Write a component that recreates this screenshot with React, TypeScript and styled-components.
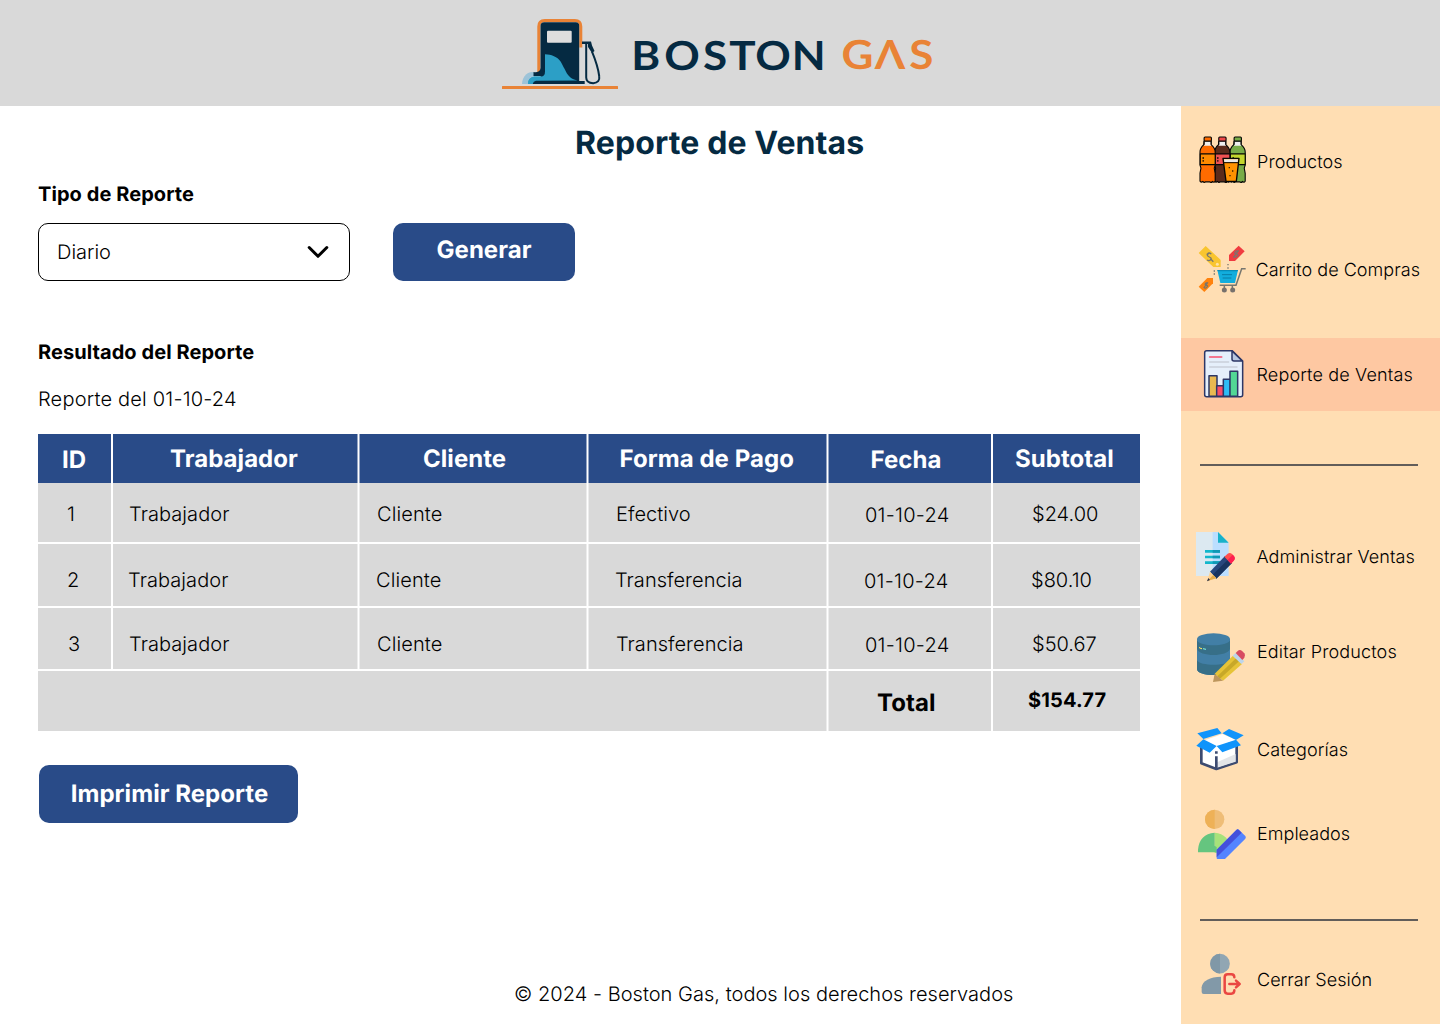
import React from "react";
import styled, { createGlobalStyle } from "styled-components";

const colors = {
  navy: "#052a42",
  blue: "#294b88",
  grey: "#d9d9d9",
  orange: "#e98336",
  peach: "#ffdeb3",
  active: "#fec8a2",
};

const GlobalStyle = createGlobalStyle`
  *, *::before, *::after { box-sizing: border-box; }
  body {
    margin: 0;
    background: #fff;
    color: #000;
    font-family: Inter, "Liberation Sans", sans-serif;
    text-rendering: geometricPrecision;
    -webkit-font-smoothing: antialiased;
  }
`;

const Page = styled.div`
  width: 1440px;
  height: 1024px;
  display: flex;
  flex-direction: column;
  overflow: hidden;
`;

const Header = styled.header`
  height: 106px;
  flex: none;
  display: flex;
  align-items: center;
  justify-content: center;
  background: ${colors.grey};
`;

const Wordmark = styled.text`
  font-family: Lato, Inter, sans-serif;
  font-size: 40px;
  font-weight: 700;
  text-anchor: middle;
`;

const Body = styled.div`
  flex: 1;
  display: flex;
  min-height: 0;
`;

const Main = styled.main`
  width: 1181px;
  padding: 17px 0 0 38px;
  display: flex;
  flex-direction: column;
  align-items: flex-start;
`;

const Title = styled.h1`
  margin: 0 0 19px 537px;
  font-size: 32px;
  line-height: 40px;
  letter-spacing: 0.12px;
  font-weight: 700;
  color: ${colors.navy};
  white-space: nowrap;
`;

const SectionLabel = styled.h2`
  margin: 0;
  font-size: 20px;
  line-height: 24px;
  letter-spacing: 0.07px;
  font-weight: 700;
`;

const Controls = styled.div`
  display: flex;
  gap: 43px;
  margin: 17px 0 59px;
`;

const Select = styled.div`
  width: 312px;
  height: 58px;
  border: 1px solid #000;
  border-radius: 10px;
  padding: 0 20px 0 18px;
  display: flex;
  align-items: center;
  justify-content: space-between;
  font-size: 20px;
  line-height: 24px;
  font-weight: 300;
`;

const Button = styled.button<{ $width: number; $lift?: number; $indent?: number }>`
  width: ${(p) => p.$width}px;
  height: 58px;
  flex: none;
  border: 0;
  border-radius: 10px;
  padding: 0 0 ${(p) => p.$lift ?? 0}px ${(p) => p.$indent ?? 0}px;
  background: ${colors.blue};
  color: #fff;
  font-family: inherit;
  text-rendering: inherit;
  font-size: 24px;
  line-height: 30px;
  letter-spacing: 0.05px;
  font-weight: 700;
  white-space: nowrap;
`;

const PrintRow = styled.div`
  padding: 34px 0 0 1px;
`;

const Caption = styled.p`
  margin: 23px 0;
  font-size: 20px;
  line-height: 24px;
  letter-spacing: 0.2px;
  font-weight: 300;
`;

const Table = styled.div`
  width: 1102px;
  display: flex;
  flex-direction: column;
`;

const Row = styled.div<{ $height: number; $gap?: number; $head?: boolean }>`
  height: ${(p) => p.$height}px;
  margin-bottom: ${(p) => p.$gap ?? 0}px;
  display: grid;
  grid-template-columns: 74px 245px 228px 239px 164px 147px;
  column-gap: 1px;
  --cell: ${(p) => (p.$head ? colors.blue : colors.grey)};
  color: ${(p) => (p.$head ? "#fff" : "#000")};
`;

type Edge = "none" | "soft" | "white";
const edgeColor = { none: "var(--cell)", soft: "rgba(255,255,255,.5)", white: "#fff" };

const Cell = styled.div<{
  $x: number;
  $y: number;
  $left: Edge;
  $right: Edge;
  $span?: number;
  $size?: number;
  $bold?: boolean;
  $tracking?: number;
}>`
  grid-column: span ${(p) => p.$span ?? 1};
  background: var(--cell);
  border-style: solid;
  border-width: 0 1px;
  border-left-color: ${(p) => edgeColor[p.$left]};
  border-right-color: ${(p) => edgeColor[p.$right]};
  padding: ${(p) => p.$y}px 0 0 ${(p) => p.$x - 1}px;
  font-size: ${(p) => p.$size ?? 20}px;
  line-height: 24px;
  letter-spacing: ${(p) => p.$tracking ?? 0.05}px;
  font-weight: ${(p) => (p.$bold ? 700 : 300)};
  white-space: nowrap;
`;

const Footer = styled.footer`
  margin: auto 0 18px 476px;
  font-size: 20px;
  line-height: 24px;
  letter-spacing: 0.03px;
  font-weight: 300;
  white-space: nowrap;
`;

const Sidebar = styled.aside`
  width: 259px;
  background: ${colors.peach};
  display: flex;
  flex-direction: column;
`;

const NavItem = styled.a<{ $top: number; $height: number; $active?: boolean }>`
  display: flex;
  flex: none;
  margin-top: ${(p) => p.$top}px;
  height: ${(p) => p.$height}px;
  background: ${(p) => (p.$active ? colors.active : "transparent")};
`;

const NavLabel = styled.span<{ $y: number; $x?: number; $tracking?: number }>`
  padding: ${(p) => p.$y}px 0 0 ${(p) => p.$x ?? 6}px;
  font-size: 18px;
  line-height: 22px;
  letter-spacing: ${(p) => p.$tracking ?? 0.04}px;
  font-weight: 300;
  white-space: nowrap;
`;

const Divider = styled.hr<{ $top: number }>`
  flex: none;
  width: 218px;
  height: 2px;
  margin: ${(p) => p.$top}px 0 0 19px;
  border: 0;
  background: #625d5a;
`;

function Logo() {
  return (
    <svg width="440" height="80" viewBox="500 13 440 80">
      <path d="M522 84a10.500 12 0 0 1 13-11.600V84z" fill="#9dc3d8" />
      <path d="M528 84q0-7 7-7.500h6V84z" fill="#2c9fc6" />
      <path d="M538.800 72V26.500q0-6 6-6h30q6 0 6 6V47.500" fill="none" stroke={colors.orange} strokeWidth="3" />
      <path d="M540.500 26q0-3.700 3.700-3.700h31.500q3.500 0 3.500 3.700v55h5.500v3h-52v-3l8-3v-2h-7.200v-4q3 .6 5-.5 2-1 2-3.500z" fill={colors.navy} />
      <rect x="547" y="30.700" width="24.700" height="12" rx="1" fill="#dedede" />
      <path d="M545 54.300c14 1 16 7.500 19.500 14.500 3 6.500 6 10.500 13 11.700L536 80.800q-2.500.2-3.500 3.200H528q0-7 7-7.500h6q4 0 4-5z" fill="#2c9fc6" />
      <path d="M582 41.500h9l1 4 2.500 5.500-2.500 2-4-6V44H582z" fill={colors.navy} />
      <path d="M586.200 44v33.500q0 5.500 7 5.700 7-.5 6-7-1.200-10-7.200-24.500" fill="none" stroke={colors.navy} strokeWidth="2" />
      <rect x="502" y="86" width="116" height="3" rx=".5" fill={colors.orange} />
      <g transform="scale(1.1 1)">
        <Wordmark x="587 620 650 675 702.700 735.300" y="69.900" fill={colors.navy}>BOSTON</Wordmark>
        <Wordmark x="779.500 809 837.500" y="68.700" fill={colors.orange}>GΛS</Wordmark>
      </g>
    </svg>
  );
}

const bottlePath = "M13 12h22v10q13 9 13 21v37l-3 9 3 15v22q-4 6-8 1-5 5-10 1h-12q-5 4-9-1-5 4-9-1v-23l3-14-3-9V43q0-12 12-21z";

function Bottle({ x, body, label, cap }: { x: number; body: string; label: string; cap: string }) {
  return (
    <g transform={`translate(${x} 51) scale(.95 1.05)`} stroke="#050505" strokeWidth="3.500" strokeLinejoin="round">
      <path d={bottlePath} fill={body} />
      <path d="M14 12h20v10l2 3H12l2-3z" fill="#eee" stroke="none" />
      <path d="M13 12v10m22-10v10" />
      <path d="M1 48h47v31H1z" fill={label} />
      <rect x="13" y="0" width="23" height="12" rx="3" fill={cap} />
      <path d="M10 57v14" strokeDasharray="6 3" />
    </g>
  );
}

const icons = {
  products: (
    <g>
      <Bottle x={147} body="#78ac48" label="#c3d52e" cap="#78ac48" />
      <Bottle x={101} body="#5b2b1b" label="#f05252" cap="#f04848" />
      <Bottle x={57} body="#ff6b00" label="#ff8a00" cap="#ff6b00" />
      <path d="M126 115h48l-8 69h-31z" fill="#ff9100" stroke="#050505" strokeWidth="4" strokeLinejoin="round" />
      <path d="M129 118h42l-1 9h-40z" fill="#e9e9e9" />
      <path d="M129 128h42" stroke="#050505" strokeWidth="3" />
      <path d="M143 141h4v4h-4zm10 10h4v4h-4zm-8 14h4v4h-4z" fill="#402000" />
    </g>
  ),
  cart: (
    <g>
      <path d="M53 54l21-21 43 40q3 3 2 8v15H97z" fill="#f9c52f" />
      <circle cx="109" cy="88" r="4.500" fill="#ffe2a8" />
      <path d="M144 60l29-28 18 17-29 29h-18z" fill="#f03b40" />
      <path d="M53 155l26-26h17v16l-26 26z" fill="#ff820d" />
      <g fill="none" stroke="#77766f" strokeWidth="4">
        <path d="M91 57q-8-6-11 0t5 9 4 8-11 1M77 56l5 4m8 13 7 7" />
        <path d="M170 49q-5-3-8 2t5 6 1 7-9-1m-2 4 16-21M80 144q-5-2-7 2t4 5 0 6-8-1m-1 3 13-17" strokeWidth="3.500" />
        <path d="M194 101h-12l-17 50h-49M130 152v8m24-8v8" strokeWidth="4.500" />
        <path d="M100 106v4m0 5v4m41-32v4m0 6v4" />
      </g>
      <path d="M109 105h62l-9 39h-44z" fill="#12addd" />
      <path d="M109 105h62l-1 4h-60z" fill="#078bb8" />
      <path d="M123 119h30m-28 10h26" stroke="#087da6" strokeWidth="3" />
      <circle cx="130" cy="165" r="7.500" fill="#77716c" />
      <circle cx="155" cy="165" r="7.500" fill="#77716c" />
    </g>
  ),
  report: (
    <g stroke="#2d3766" strokeWidth="4.500" strokeLinejoin="round">
      <path d="M77 47h77l31 31v101q0 6-6 6H77q-6 0-6-6V53q0-6 6-6z" fill="#e5effb" />
      <path d="M153 48v24q0 6 6 6h25z" fill="#b8c7e0" />
      <path d="M84 122h24v62H84z" fill="#e9b950" />
      <path d="M107 152h21v32h-21z" fill="#fb4d68" />
      <path d="M127 133h21v51h-21z" fill="#2ebcf5" />
      <path d="M147 109h23v75h-23z" fill="#52d795" />
      <path d="M86 66h36" stroke="#f7506e" strokeWidth="5" strokeLinecap="round" />
      <path d="M86 81h57M86 96h82" stroke="#c9cfda" strokeWidth="4" strokeLinecap="round" />
    </g>
  ),
  manage: (
    <g>
      <path d="M45 36h66l32 32v100H45z" fill="#bbdeff" />
      <path d="M45 36h50v132H45z" fill="#dce9f1" />
      <path d="M111 36l32 32h-32z" fill="#18b2c9" />
      <path d="M72 94h45M72 111h45M72 128h45" stroke="#12b7cc" strokeWidth="8" />
      <path d="M95 94h22M95 111h22M95 128h22" stroke="#1098b4" strokeWidth="8" />
      <path d="M87 155l45-47 21 21-47 47z" fill="#27477d" />
      <path d="M95 164l47-46 11 11-47 47z" fill="#183460" />
      <path d="M130 110l10-9q7-5 14 2l4 4q7 8 0 15l-8 9z" fill="#ff4f50" />
      <path d="M140 120l15-16 3 3q7 8 0 15l-8 9z" fill="#ff1e51" />
      <path d="M87 155l19 20-27 8z" fill="#ffd18e" />
      <path d="M97 165l9 10-27 8z" fill="#e7ad48" />
      <path d="M82 174l5 6-9 4z" fill="#26304c" />
    </g>
  ),
  edit: (
    <g>
      <path d="M48 57v90c0 24 99 24 99 0V57z" fill="#427fa6" />
      <path d="M48 61c8 20 91 20 99 0v25c-6 25-93 25-99 0zM48 121c8 18 91 18 99 0v26c0 24-99 24-99 0z" fill="#376f88" />
      <ellipse cx="97.500" cy="57" rx="49.500" ry="17" fill="#427fa6" />
      <path d="M54 80q5 5 9 4v4q-6-1-9-4z" fill="#f1dd65" />
      <path d="M66 84l9 2v4l-9-2z" fill="#74dccd" />
      <path d="M101 161l55-54 27 25-57 50z" fill="#e6c337" />
      <path d="M109 169l56-54 9 9-57 52z" fill="#c8a829" />
      <path d="M155 107l9-8 26 25-9 8z" fill="#bdd5eb" />
      <path d="M164 99l6-6q7-6 14 1l6 6q5 6 0 13l-6 7z" fill="#d74c62" />
      <path d="M101 161l25 21-30 4z" fill="#bd965c" />
    </g>
  ),
  categories: (
    <g strokeLinejoin="round">
      <path d="M61 90l46-21 60 22v51l-61 20-45-17z" fill="#fff" stroke="#3d4b70" strokeWidth="8" />
      <path d="M66 77l58-20 42 18-57 20z" fill="#fff" />
      <path d="M108 142l56-25v23l-56 18z" fill="#e3e5e8" />
      <path d="M106 109v7m0 8v36" stroke="#3d4b70" strokeWidth="8" />
      <path d="M49 55l60-16 13 16-55 17zM124 55l20-13 44 19-23 14zM46 92l21-19 40 20-21 20zM107 93l58-19 15 17-56 21z" fill="#1094fb" />
    </g>
  ),
  employees: (
    <g>
      <circle cx="101" cy="58" r="29" fill="#efbd77" />
      <path d="M101 29a29 29 0 0 0 0 58z" fill="#eeb157" />
      <path d="M101 98q43 4 48 49l-9 12h-39z" fill="#a7e27a" />
      <path d="M101 98q-46 4-50 51v8h56v-15l-6-5z" fill="#65c57f" />
      <path d="M109 177q-2 0-2-3v-25l59-59q4-4 8 0l19 18q3 4 0 8l-61 61z" fill="#5484ff" />
      <path d="M107 172v-23l59-59q4-4 8 0l8 8z" fill="#4450dc" />
    </g>
  ),
  logout: (
    <g>
      <circle cx="117" cy="71" r="29.500" fill="#91a6b3" />
      <path d="M117 41.500a29.500 29.500 0 0 0 0 59z" fill="#8098a7" />
      <path d="M120 110v52H68q-6 0-6-6v-14c1-19 26-32 58-32z" fill="#8299a8" />
      <g fill="none" stroke="#ea4742" strokeWidth="7.500" strokeLinecap="round" strokeLinejoin="round">
        <path d="M160 112q0-9-9-9h-11q-9 0-9 9v39q0 10 9 10h11q9 0 9-10M145 132h31m-11-10 11 10-11 10" />
      </g>
    </g>
  ),
};

function NavIcon({ name, height, offset = 0 }: { name: keyof typeof icons; height: number; offset?: number }) {
  return (
    <svg width="70" height={height} viewBox={`0 ${offset} 210 ${height * 3}`}>
      {icons[name]}
    </svg>
  );
}

type NavEntry = {
  icon: keyof typeof icons;
  label: string;
  top: number;
  height: number;
  y: number;
  x?: number;
  offset?: number;
  tracking?: number;
  active?: boolean;
};

const salesLinks: NavEntry[] = [
  { icon: "products", label: "Productos", top: 14, height: 80, y: 32, tracking: 0.1 },
  { icon: "cart", label: "Carrito de Compras", top: 35, height: 70, y: 25, x: 4.5 },
  { icon: "report", label: "Reporte de Ventas", top: 33, height: 73, y: 27, x: 5.5, offset: 9, tracking: 0.15, active: true },
];

const adminLinks: NavEntry[] = [
  { icon: "manage", label: "Administrar Ventas", top: 54, height: 70, y: 27, x: 5.5, tracking: 0.08 },
  { icon: "edit", label: "Editar Productos", top: 30, height: 70, y: 22, tracking: 0.15 },
  { icon: "categories", label: "Categorías", top: 25, height: 65, y: 25, tracking: 0.1 },
  { icon: "employees", label: "Empleados", top: 20, height: 65, y: 24 },
];

const sessionLinks: NavEntry[] = [{ icon: "logout", label: "Cerrar Sesión", top: 19, height: 65, y: 30 }];

function NavGroup({ links }: { links: NavEntry[] }) {
  return (
    <>
      {links.map((l) => (
        <NavItem key={l.label} $top={l.top} $height={l.height} $active={l.active}>
          <NavIcon name={l.icon} height={l.height} offset={l.offset} />
          <NavLabel $y={l.y} $x={l.x} $tracking={l.tracking}>{l.label}</NavLabel>
        </NavItem>
      ))}
    </>
  );
}

const edges: [Edge, Edge][] = [
  ["none", "white"],
  ["none", "soft"],
  ["soft", "soft"],
  ["soft", "soft"],
  ["soft", "white"],
  ["none", "none"],
];

const headings = [
  { text: "ID", x: 24, y: 14 },
  { text: "Trabajador", x: 57, y: 13 },
  { text: "Cliente", x: 64, y: 13 },
  { text: "Forma de Pago", x: 31.5, y: 13 },
  { text: "Fecha", x: 42.5, y: 14 },
  { text: "Subtotal", x: 22, y: 13 },
];

const DATE_COLUMN = 4;
const tracking = [0, 0.07, 0.12, 0.04, 0.26, 0];

const rows = [
  { height: 59, y: 19, x: [29, 16, 18, 28, 37, 39], cells: ["1", "Trabajador", "Cliente", "Efectivo", "01-10-24", "$24.00"] },
  { height: 62, y: 24, x: [29, 15, 17, 27, 36, 38], cells: ["2", "Trabajador", "Cliente", "Transferencia", "01-10-24", "$80.10"] },
  { height: 61, y: 24, x: [30, 16, 18, 28, 37, 39], cells: ["3", "Trabajador", "Cliente", "Transferencia", "01-10-24", "$50.67"] },
];

export default function App() {
  return (
    <Page>
      <GlobalStyle />
      <Header>
        <Logo />
      </Header>
      <Body>
        <Main>
          <Title>Reporte de Ventas</Title>
          <SectionLabel>Tipo de Reporte</SectionLabel>
          <Controls>
            <Select>
              Diario
              <svg width="22" height="14" viewBox="0 0 22 14">
                <path d="M2.200 2.500 11 11.300l8.800-8.800" fill="none" stroke="#000" strokeWidth="3" strokeLinecap="round" strokeLinejoin="round" />
              </svg>
            </Select>
            <Button $width={182} $lift={4}>Generar</Button>
          </Controls>
          <SectionLabel>Resultado del Reporte</SectionLabel>
          <Caption>Reporte del 01-10-24</Caption>
          <Table>
            <Row $height={49} $head>
              {headings.map((h, i) => (
                <Cell key={h.text} $x={h.x} $y={h.y} $left={edges[i][0]} $right={edges[i][1]} $size={24} $bold>
                  {h.text}
                </Cell>
              ))}
            </Row>
            {rows.map((r) => (
              <Row key={r.cells[0]} $height={r.height} $gap={2}>
                {r.cells.map((text, i) => (
                  <Cell
                    key={i}
                    $x={r.x[i]}
                    $y={i === DATE_COLUMN ? r.y + 1 : r.y}
                    $left={edges[i][0]}
                    $right={edges[i][1]}
                    $tracking={tracking[i]}
                  >
                    {text}
                  </Cell>
                ))}
              </Row>
            ))}
            <Row $height={60}>
              <Cell $x={1} $y={0} $left="none" $right="soft" $span={4} />
              <Cell $x={49} $y={20} $left="soft" $right="white" $size={24} $bold>Total</Cell>
              <Cell $x={35} $y={17} $left="none" $right="none" $tracking={0.15} $bold>$154.77</Cell>
            </Row>
          </Table>
          <PrintRow>
            <Button $width={259} $indent={2}>Imprimir Reporte</Button>
          </PrintRow>
          <Footer>© 2024 - Boston Gas, todos los derechos reservados</Footer>
        </Main>
        <Sidebar>
          <NavGroup links={salesLinks} />
          <Divider $top={53} />
          <NavGroup links={adminLinks} />
          <Divider $top={54} />
          <NavGroup links={sessionLinks} />
        </Sidebar>
      </Body>
    </Page>
  );
}
